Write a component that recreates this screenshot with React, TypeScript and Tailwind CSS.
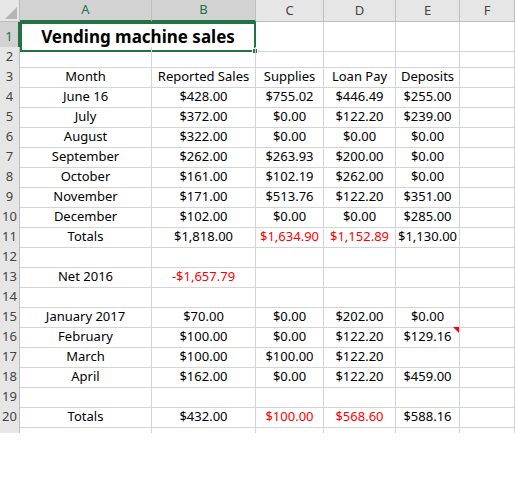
const cols = ["A", "B", "C", "D", "E", "F"];
const R = "text-[#ff0000]";

type Cell = { t?: string; c?: string };
const rows: Cell[][] = [
  [],
  [],
  [{ t: "Month" }, { t: "Reported Sales" }, { t: "Supplies" }, { t: "Loan Pay" }, { t: "Deposits" }],
  [{ t: "June 16" }, { t: "$428.00" }, { t: "$755.02" }, { t: "$446.49" }, { t: "$255.00" }],
  [{ t: "July" }, { t: "$372.00" }, { t: "$0.00" }, { t: "$122.20" }, { t: "$239.00" }],
  [{ t: "August" }, { t: "$322.00" }, { t: "$0.00" }, { t: "$0.00" }, { t: "$0.00" }],
  [{ t: "September" }, { t: "$262.00" }, { t: "$263.93" }, { t: "$200.00" }, { t: "$0.00" }],
  [{ t: "October" }, { t: "$161.00" }, { t: "$102.19" }, { t: "$262.00" }, { t: "$0.00" }],
  [{ t: "November" }, { t: "$171.00" }, { t: "$513.76" }, { t: "$122.20" }, { t: "$351.00" }],
  [{ t: "December" }, { t: "$102.00" }, { t: "$0.00" }, { t: "$0.00" }, { t: "$285.00" }],
  [{ t: "Totals" }, { t: "$1,818.00" }, { t: "$1,634.90", c: R }, { t: "$1,152.89", c: R }, { t: "$1,130.00" }],
  [],
  [{ t: "Net 2016" }, { t: "-$1,657.79", c: R }],
  [],
  [{ t: "January 2017" }, { t: "$70.00" }, { t: "$0.00" }, { t: "$202.00" }, { t: "$0.00" }],
  [{ t: "February" }, { t: "$100.00" }, { t: "$0.00" }, { t: "$122.20" }, { t: "$129.16", c: "note" }],
  [{ t: "March" }, { t: "$100.00" }, { t: "$100.00" }, { t: "$122.20" }],
  [{ t: "April" }, { t: "$162.00" }, { t: "$0.00" }, { t: "$122.20" }, { t: "$459.00" }],
  [],
  [{ t: "Totals" }, { t: "$432.00" }, { t: "$100.00", c: R }, { t: "$568.60", c: R }, { t: "$588.16" }],
];

const grid = "grid grid-cols-[20px_132px_104px_68px_72px_64px_55px]";

export default function App() {
  return (
    <div className="w-[515px] h-[500px] bg-white overflow-hidden font-['Liberation_Sans',sans-serif] text-[13px] text-black">
      <div className={`${grid} h-[22px] bg-[#e6e6e6] text-[#444]`}>
        <div className="border-r border-b border-[#bdbdbd] relative">
          <div className="absolute right-[2px] bottom-[2px] w-0 h-0 border-l-[12px] border-l-transparent border-b-[12px] border-b-[#b4b4b4]" />
        </div>
        {cols.map((c, i) => (
          <div
            key={c}
            className={`flex items-center justify-center border-r border-[#bdbdbd] ${
              i < 2 ? "bg-[#d2d2d2] text-[#217346] border-b-2 border-b-[#217346]" : "border-b"
            }`}
          >
            {c}
          </div>
        ))}
      </div>
      <div className={`${grid} h-[25px]`}>
        <div className="bg-[#d2d2d2] text-[#217346] border-r-2 border-r-[#217346] border-b border-[#bdbdbd] flex items-center justify-center">1</div>
        <div className="col-span-2 relative border-2 border-[#217346] flex items-center justify-center text-[17px] font-bold">
          Vending machine sales
          <div className="absolute -right-[4px] -bottom-[4px] w-[6px] h-[6px] bg-[#217346] border border-white" />
        </div>
        {[0, 1, 2, 3].map((i) => (
          <div key={i} className="border-r border-b border-[#d4d4d4]" />
        ))}
      </div>
      {rows.slice(1).map((row, ri) => (
        <div key={ri} className={`${grid} h-[20px]`}>
          <div className="bg-[#e6e6e6] text-[#444] border-r border-b border-[#bdbdbd] flex items-center justify-center">
            {ri + 2}
          </div>
          {cols.map((_, ci) => {
            const cell = row[ci];
            return (
              <div
                key={ci}
                className={`relative border-r border-b border-[#d4d4d4] flex items-center justify-center whitespace-nowrap ${
                  cell?.c && cell.c !== "note" ? cell.c : ""
                }`}
              >
                {cell?.t}
                {cell?.c === "note" && (
                  <div className="absolute right-0 top-0 w-0 h-0 border-l-[6px] border-l-transparent border-t-[6px] border-t-[#ff0000]" />
                )}
              </div>
            );
          })}
        </div>
      ))}
      <div className={`${grid} h-[6px]`}>
        <div className="bg-[#e6e6e6] border-r border-[#bdbdbd]" />
        {cols.map((c) => (
          <div key={c} className="border-r border-[#d4d4d4]" />
        ))}
      </div>
    </div>
  );
}
